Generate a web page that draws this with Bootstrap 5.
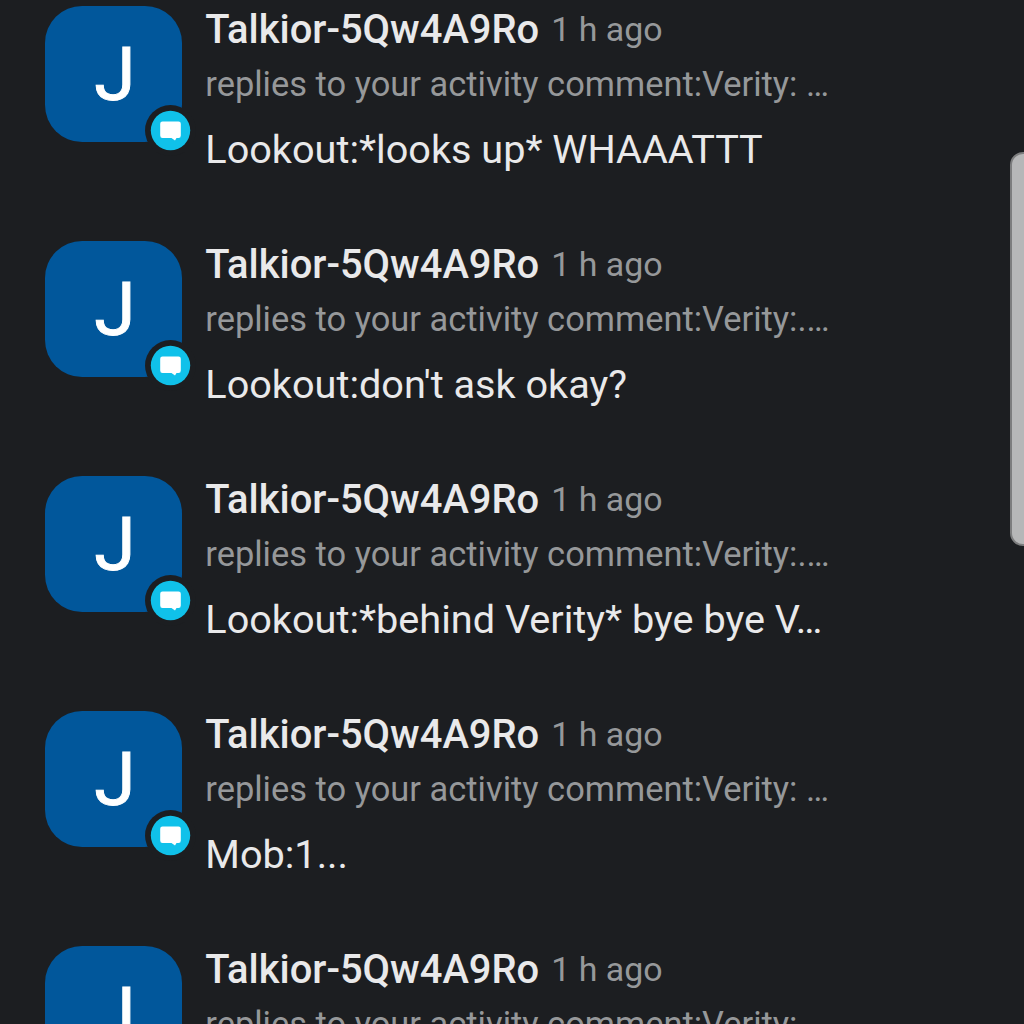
<!DOCTYPE html>
<html lang="en">
<head>
  <meta charset="UTF-8">
  <meta name="viewport" content="width=device-width, initial-scale=1.0">
  <title>Notifications</title>
  <link rel="stylesheet" href="https://cdn.jsdelivr.net/npm/bootstrap@5.3.0/dist/css/bootstrap.min.css">
  <style>
    body {
      background: #1c1e21;
      color: #e9e9ea;
      font-family: Roboto, "Liberation Sans", sans-serif;
    }
    .feed { padding: 5.7px 0 0 45.3px; }
    .notice { height: 235px; gap: 23.5px; }
    .avatar {
      width: 136.5px;
      height: 136px;
      border-radius: 37px;
      background: #01579b;
    }
    .initial {
      font-size: 75px;
      line-height: 137px;
      padding-left: 3px;
      color: #fff;
      -webkit-text-stroke: 1px #fff;
    }
    .avatar-badge { right: -14.5px; bottom: -14.5px; width: 51px; height: 51px; }
    .user-name { font-size: 39.9px; font-weight: 500; line-height: 48px; }
    .time-ago { font-size: 33.9px; line-height: 48px; margin-left: 12px; color: #96989a; }
    .context { font-size: 34.45px; line-height: 44px; margin-top: 8px; color: #96989a; }
    .message { font-size: 39.65px; line-height: 48px; margin-top: 20px; }
    .scroll-thumb {
      right: -12px;
      top: 152px;
      width: 26px;
      height: 394px;
      border-radius: 14px;
      background: #b6b7b8;
      border: 2px solid #7c7d7e;
    }
  </style>
</head>
<body class="position-relative vh-100 overflow-hidden">
  <svg class="d-none">
    <symbol id="chat-badge" viewBox="0 0 51 51">
      <circle cx="25.500" cy="25.500" r="25.500" fill="#1c1e21"/>
      <circle cx="25.500" cy="25.500" r="19.700" fill="#10c1ea"/>
      <path d="M17.500 16.500H33.500Q35.800 16.500 35.800 18.800V30.500Q35.800 33 33.500 33H31.500L30 35.500L26.500 33H17.500Q15.200 33 15.200 30.500V18.800Q15.200 16.500 17.500 16.500Z" fill="#fff"/>
    </symbol>
  </svg>
  <main class="feed h-100 overflow-hidden" id="feed"></main>
  <div class="scroll-thumb position-absolute"></div>

  <script src="https://cdn.jsdelivr.net/npm/bootstrap@5.3.0/dist/js/bootstrap.bundle.min.js"></script>
  <script>
    const notices = [
      ["replies to your activity comment:Verity: …", "Lookout:*looks up* WHAAATTT"],
      ["replies to your activity comment:Verity:.…", "Lookout:don't ask okay?"],
      ["replies to your activity comment:Verity:.…", "Lookout:*behind Verity* bye bye V…"],
      ["replies to your activity comment:Verity: …", "Mob:1..."],
      ["replies to your activity comment:Verity:", ""]
    ];
    document.getElementById("feed").innerHTML = notices.map(([context, message]) => `
      <article class="notice d-flex">
        <div class="avatar position-relative flex-shrink-0 text-center">
          <span class="initial">J</span>
          <svg class="avatar-badge position-absolute"><use href="#chat-badge"/></svg>
        </div>
        <div class="text-nowrap">
          <div class="d-flex align-items-center"><span class="user-name">Talkior-5Qw4A9Ro</span><span class="time-ago">1 h ago</span></div>
          <div class="context">${context}</div>
          <div class="message">${message}</div>
        </div>
      </article>`).join("");
  </script>
</body>
</html>
